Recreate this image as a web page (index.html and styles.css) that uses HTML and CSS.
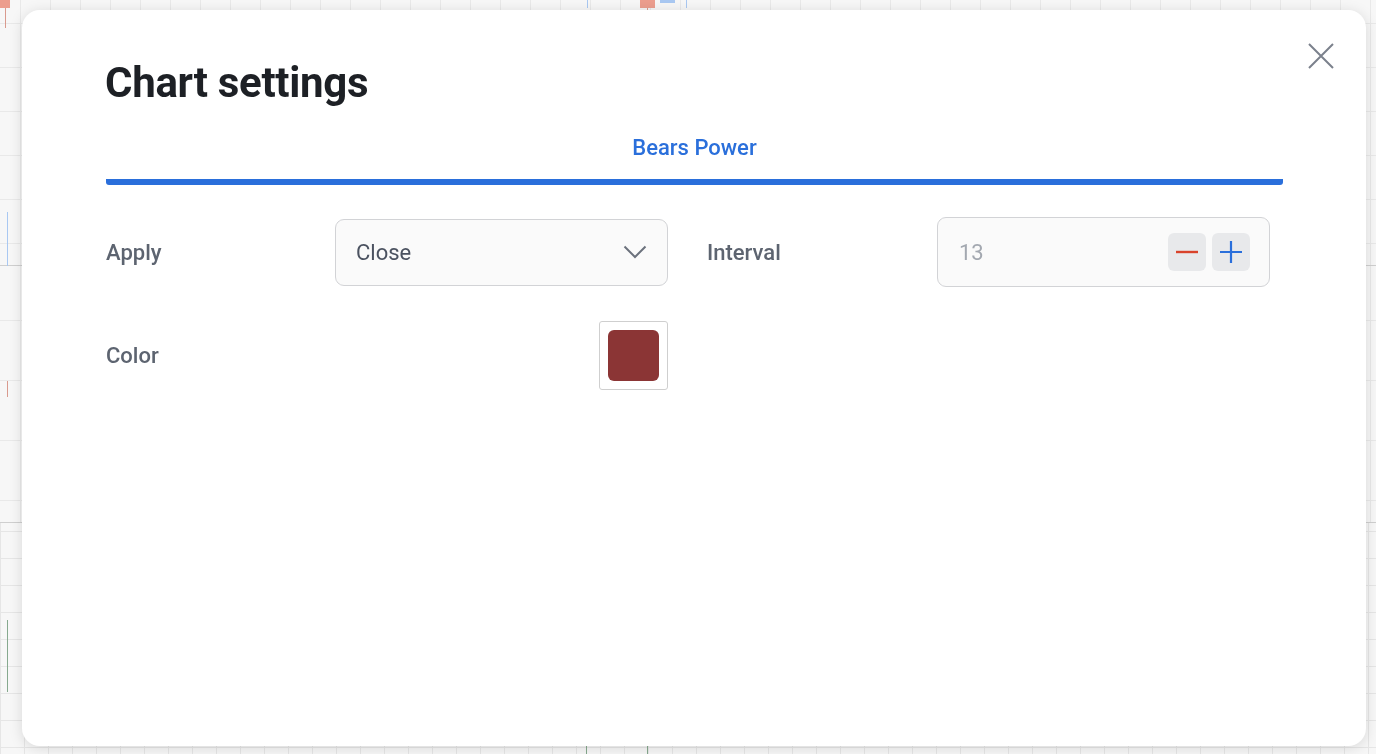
FILE: index.html
```html
<!DOCTYPE html>
<html lang="en">
<head>
<meta charset="utf-8">
<title>Chart settings</title>
<link rel="stylesheet" href="styles.css">
</head>
<body>
<div class="chart">
  <div class="pane pane-a"></div>
  <div class="pane pane-b"></div>
  <div class="pane pane-c"></div>
  <span class="candle candle-red c1"></span>
  <span class="wick wick-red w1"></span>
  <span class="candle candle-red c2"></span>
  <span class="wick wick-red w2"></span>
  <span class="candle candle-blue c3"></span>
  <span class="wick wick-blue w3"></span>
  <span class="wick wick-blue w4"></span>
  <span class="wick wick-blue w5"></span>
  <span class="wick wick-red w6"></span>
  <span class="wick wick-green w7"></span>
  <span class="wick wick-green w8"></span>
  <span class="wick wick-green w9"></span>
</div>

<div class="modal">
  <button class="close" aria-label="Close">
    <svg width="26" height="26" viewBox="0 0 26 26"><path d="M1 1 L25 25 M25 1 L1 25" stroke="#7b818c" stroke-width="2" fill="none"/></svg>
  </button>
  <h1 class="title">Chart settings</h1>
  <div class="tabs">
    <div class="tab tab-active">Bears Power</div>
  </div>
  <div class="form">
    <div class="field">
      <span class="label">Apply</span>
      <div class="select">
        <span class="select-value">Close</span>
        <svg class="chevron" width="24" height="14" viewBox="0 0 24 14"><path d="M1.5 1.5 L12 12 L22.5 1.5" stroke="#6b717c" stroke-width="2" fill="none"/></svg>
      </div>
    </div>
    <div class="field">
      <span class="label">Interval</span>
      <div class="stepper">
        <span class="stepper-value">13</span>
        <div class="stepper-buttons">
          <button class="step step-minus" aria-label="Decrease"><svg width="24" height="24" viewBox="0 0 24 24"><path d="M1 12 H23" stroke="#d9432b" stroke-width="2.4"/></svg></button>
          <button class="step step-plus" aria-label="Increase"><svg width="24" height="24" viewBox="0 0 24 24"><path d="M1 12 H23 M12 1 V23" stroke="#2a6fdb" stroke-width="2.2"/></svg></button>
        </div>
      </div>
    </div>
    <div class="field">
      <span class="label">Color</span>
      <div class="swatch-box"><span class="swatch"></span></div>
    </div>
  </div>
</div>
</body>
</html>
```

FILE: styles.css
```css
* { box-sizing: border-box; }

html, body {
  margin: 0;
  height: 754px;
  overflow: hidden;
}

body {
  font-family: Roboto, "Liberation Sans", Arial, sans-serif;
  background: #f6f6f6;
}

/* chart backdrop */
.chart {
  position: fixed;
  inset: 0;
  display: flex;
  flex-direction: column;
  z-index: 0;
}

.pane {
  background-color: #f7f7f7;
}

.pane-a {
  height: 266px;
  border-bottom: 1px solid #cfcfcf;
  background-image:
    linear-gradient(90deg, #e9e9e9 1px, transparent 1px),
    linear-gradient(#e9e9e9 1px, transparent 1px);
  background-size: 30px 44px;
  background-position: 20px 23px;
}

.pane-b {
  height: 257px;
  border-bottom: 1px solid #cfcfcf;
  background-image:
    linear-gradient(90deg, #e9e9e9 1px, transparent 1px),
    linear-gradient(#e9e9e9 1px, transparent 1px);
  background-size: 30px 60px;
  background-position: 20px 54px;
}

.pane-c {
  flex: 1;
  background-image:
    linear-gradient(90deg, #e6e6e6 1px, transparent 1px),
    linear-gradient(#e6e6e6 1px, transparent 1px);
  background-size: 24px 27px;
  background-position: 0 8px;
}

.candle, .wick {
  position: absolute;
  display: block;
}
.candle-red { background: #ec9e8e; }
.candle-blue { background: #a9c8f2; }
.wick { width: 1px; }
.wick-red { background: #d99a8e; }
.wick-blue { background: #a9c8f2; }
.wick-green { background: #86a98e; }

.c1 { left: 0; top: 0; width: 10px; height: 8px; }
.w1 { left: 5px; top: 8px; height: 20px; }
.c2 { left: 640px; top: 0; width: 15px; height: 8px; }
.w2 { left: 647px; top: 8px; height: 6px; }
.c3 { left: 660px; top: 0; width: 15px; height: 3px; }
.w3 { left: 587px; top: 0; height: 8px; }
.w4 { left: 686px; top: 0; height: 8px; }
.w5 { left: 7px; top: 212px; height: 54px; }
.w6 { left: 7px; top: 381px; height: 16px; }
.w7 { left: 7px; top: 620px; height: 72px; }
.w8 { left: 586px; top: 746px; height: 8px; }
.w9 { left: 647px; top: 746px; height: 8px; }

/* modal */
.modal {
  position: relative;
  z-index: 1;
  margin: 10px 10px 0 22px;
  height: 736px;
  padding: 48px 83px 0 84px;
  background: #ffffff;
  border-radius: 18px;
  box-shadow: 0 2px 14px rgba(0, 0, 0, 0.13);
}

.close {
  position: absolute;
  top: 33px;
  right: 32px;
  width: 26px;
  height: 26px;
  padding: 0;
  border: 0;
  background: none;
  display: flex;
}

.title {
  margin: 0 0 0 -1px;
  font-size: 42px;
  line-height: 50px;
  font-weight: 700;
  color: #1d2025;
  letter-spacing: -0.3px;
}

.tabs {
  margin-top: 27px;
  display: flex;
}

.tab {
  flex: 1;
  text-align: center;
  font-size: 22px;
  line-height: 26px;
  font-weight: 500;
  color: #2a6fdb;
  padding-bottom: 18px;
  border-bottom: 6px solid #2a6fdb;
  border-radius: 0 0 3px 3px;
}

.form {
  margin-top: 32px;
  display: grid;
  grid-template-columns: 562px 563px;
  column-gap: 39px;
  row-gap: 33px;
}

.field {
  display: flex;
  align-items: center;
  justify-content: space-between;
  height: 70px;
}

.label {
  font-size: 22px;
  font-weight: 500;
  color: #5d6470;
}

.select {
  width: 333px;
  height: 67px;
  display: flex;
  align-items: center;
  justify-content: space-between;
  padding: 0 20px 0 20px;
  border: 1px solid #d2d3d6;
  border-radius: 9px;
  background: #fafafa;
}

.select-value {
  font-size: 22px;
  color: #4b5260;
}

.chevron { display: block; }

.stepper {
  width: 333px;
  height: 70px;
  display: flex;
  align-items: center;
  justify-content: space-between;
  padding: 0 19px 0 21px;
  border: 1px solid #d2d3d6;
  border-radius: 9px;
  background: #fafafa;
}

.stepper-value {
  font-size: 22px;
  color: #a3a8b0;
}

.stepper-buttons {
  display: flex;
  gap: 6px;
}

.step {
  width: 38px;
  height: 38px;
  padding: 0;
  border: 0;
  border-radius: 6px;
  background: #e8e9eb;
  display: flex;
  align-items: center;
  justify-content: center;
}

.step svg { display: block; }

.swatch-box {
  width: 69px;
  height: 69px;
  padding: 8px;
  border: 1px solid #cfcfcf;
  border-radius: 3px;
  background: #ffffff;
}

.swatch {
  display: block;
  width: 100%;
  height: 100%;
  border-radius: 6px;
  background: #8b3535;
}
```
